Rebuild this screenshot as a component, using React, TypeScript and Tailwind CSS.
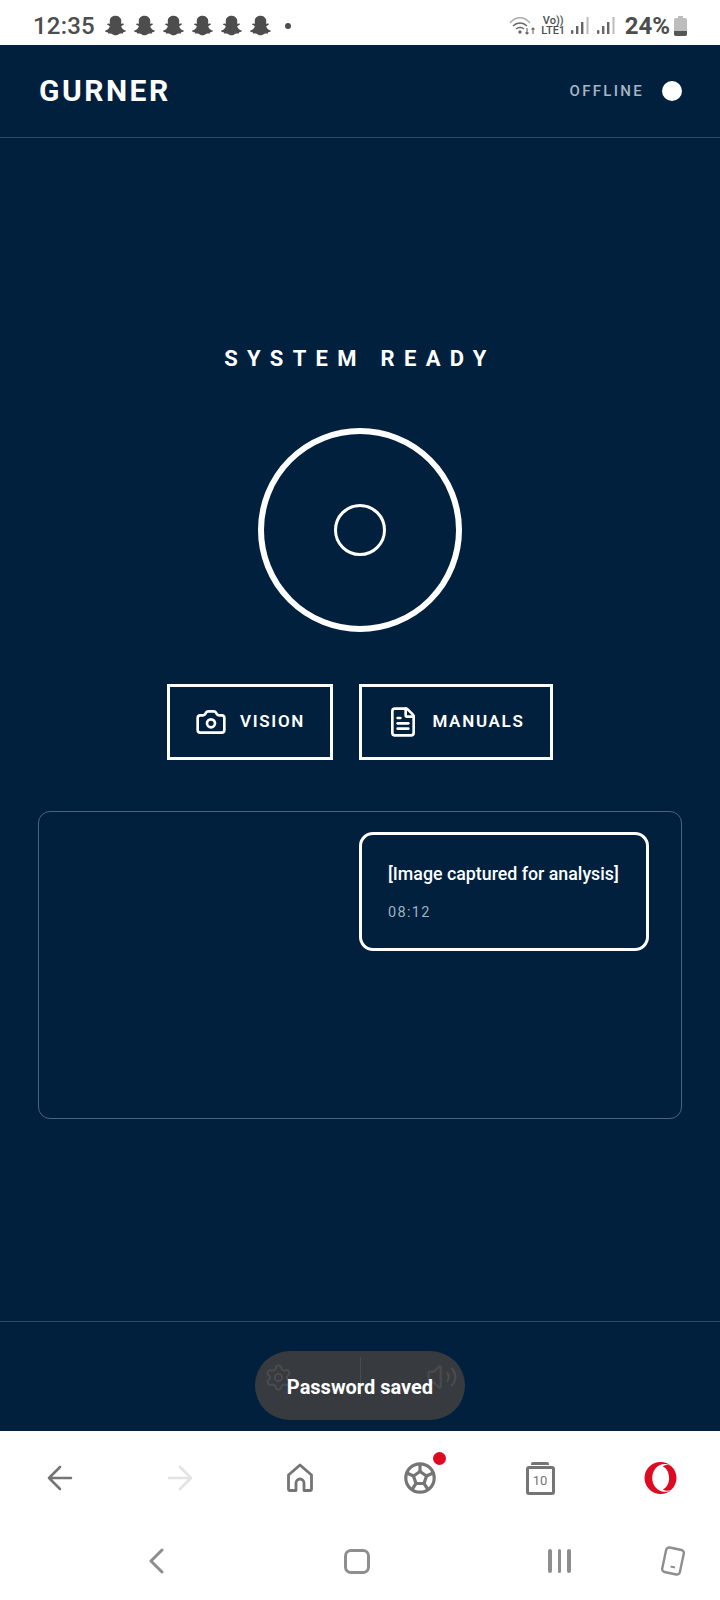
import React from "react";
import { FaSnapchatGhost, FaOpera } from "react-icons/fa";
import { Camera, FileText, Settings, Volume2 } from "lucide-react";

function Bars() {
  return (
    <svg width="18" height="20" viewBox="0 0 18 20" fill="#666">
      <rect x="0" y="14" width="2.4" height="4" rx="1" />
      <rect x="5" y="10" width="2.4" height="8" />
      <rect x="10" y="6" width="2.4" height="12" />
      <rect x="15.500" y="1" width="2" height="17" fill="#bbb" />
    </svg>
  );
}

function StatusBar() {
  return (
    <div className="h-[45px] bg-white flex items-center pt-[6px] pl-[33px] pr-[33px] text-[#4d4d4d] shrink-0 font-['Roboto',sans-serif]">
      <span className="text-[24px] font-medium leading-none tracking-[0.2px]">12:35</span>
      <div className="flex items-center gap-[8px] ml-[10px]">
        {[0, 1, 2, 3, 4, 5].map((i) => (
          <FaSnapchatGhost key={i} size={21} color="#4d4d4d" />
        ))}
      </div>
      <span className="w-[6px] h-[6px] rounded-full bg-[#4d4d4d] ml-[14px]" />
      <div className="ml-auto flex items-center">
        <svg width="26" height="20" viewBox="0 0 26 20" fill="none" stroke="#666" strokeWidth="1.300">
          <path d="M1 7 C7 0 15 0 21 7" stroke="#aaa" />
          <path d="M4 10 C8 6 14 6 18 10" />
          <path d="M7 13 C9 11 13 11 15 13" />
          <circle cx="11" cy="16" r="1" fill="#666" />
          <path d="M18 12v6M16.500 16.500l1.500 1.500 1.500-1.500M24 18v-6M22.500 13.500l1.500-1.500 1.500 1.500" strokeWidth="1.100" />
        </svg>
        <div className="flex flex-col items-center text-[11px] leading-[9px] ml-[7px] font-medium w-[23px]">
          <span>Vo))</span>
          <span className="mt-[1px]">LTE1</span>
        </div>
        <div className="ml-[6px]"><Bars /></div>
        <div className="ml-[8px]"><Bars /></div>
        <span className="text-[24px] font-bold ml-[10px] leading-none">24%</span>
        <svg width="13" height="20" viewBox="0 0 13 20" className="ml-[4px]">
          <rect x="4" y="0" width="5" height="3" fill="#bdbdbd" />
          <rect x="0" y="2" width="13" height="18" rx="2" fill="#bdbdbd" />
          <path d="M0 15h13v3a2 2 0 0 1-2 2H2a2 2 0 0 1-2-2z" fill="#555" />
        </svg>
      </div>
    </div>
  );
}

function Header() {
  return (
    <header className="h-[93px] shrink-0 flex items-center justify-between pl-[39px] pr-[38px] border-b border-[#2f4a68]">
      <span className="text-[30px] font-bold tracking-[2.500px] text-white leading-none">GURNER</span>
      <div className="flex items-center gap-[18px]">
        <span className="text-[15px] font-medium tracking-[2.300px] pt-[1px] text-[#a6b5c4]">OFFLINE</span>
        <span className="w-[20px] h-[20px] rounded-full bg-white" />
      </div>
    </header>
  );
}

function Main() {
  return (
    <main className="flex-1 flex flex-col items-center pt-[207px]">
      <h1 className="text-[22px] leading-[28px] font-bold tracking-[9.300px] text-white">SYSTEM READY</h1>
      <div className="mt-[55px] w-[204px] h-[204px] rounded-full border-[6px] border-white flex items-center justify-center">
        <div className="w-[52px] h-[52px] rounded-full border-[3px] border-white" />
      </div>
      <div className="mt-[52px] flex gap-[26px]">
        <button className="w-[166px] h-[76px] border-[3px] border-white flex items-center justify-center gap-[13px] text-white">
          <Camera size={32} strokeWidth={2} />
          <span className="text-[17px] font-semibold tracking-[1.700px]">VISION</span>
        </button>
        <button className="w-[194px] h-[76px] border-[3px] border-white flex items-center justify-center gap-[13px] text-white">
          <FileText size={32} strokeWidth={2} />
          <span className="text-[17px] font-semibold tracking-[1.700px]">MANUALS</span>
        </button>
      </div>
      <div className="mt-[51px] w-[644px] h-[308px] rounded-[12px] border border-[#4a637e] pt-[20px] pr-[32px] flex flex-col items-end">
        <div className="w-[290px] h-[119px] rounded-[14px] border-[3px] border-white pl-[26px] pt-[26px]">
          <p className="text-[17.800px] font-medium leading-[26px] text-white">[Image captured for analysis]</p>
          <p className="mt-[16px] text-[14.500px] leading-[20px] tracking-[1.300px] text-[#9fb0c0]">08:12</p>
        </div>
      </div>
    </main>
  );
}

function Footer() {
  return (
    <footer className="h-[110px] shrink-0 border-t border-[#2f4a68] flex items-start justify-center pt-[35px] pl-[2px] relative">
      <div className="flex items-center text-white">
        <Settings size={29} strokeWidth={1.600} />
        <span className="ml-[67px] w-px h-[40px] bg-white" />
        <Volume2 size={32} strokeWidth={1.600} className="ml-[65px]" />
      </div>
      <div className="absolute left-[255px] top-[29px] w-[210px] h-[69px] pt-[2px] rounded-full bg-[#3b3d40ed] flex items-center justify-center">
        <span className="text-[20px] font-bold text-white">Password saved</span>
      </div>
    </footer>
  );
}

function BrowserBar() {
  return (
    <div className="h-[94px] shrink-0 bg-white grid grid-cols-6 items-center justify-items-center">
      <svg width="26" height="26" viewBox="0 0 26 26" fill="none" stroke="#757575" strokeWidth="2.600" strokeLinecap="round" strokeLinejoin="round">
        <path d="M24 13H2M13 2 2 13l11 11" />
      </svg>
      <svg width="26" height="26" viewBox="0 0 26 26" fill="none" stroke="#e3e3e3" strokeWidth="2.600" strokeLinecap="round" strokeLinejoin="round">
        <path d="M2 13h22M13 2l11 11-11 11" />
      </svg>
      <svg width="28" height="30" viewBox="0 0 28 30" fill="none" stroke="#757575" strokeWidth="2.800" strokeLinejoin="round">
        <path d="M2.500 12 14 2l11.500 10v14a1.500 1.500 0 0 1-1.500 1.500h-6V20a4 4 0 0 0-8 0v7.500H4A1.500 1.500 0 0 1 2.500 26Z" />
      </svg>
      <div className="relative w-[32px] h-[32px]">
        <svg width="32" height="32" viewBox="0 0 32 32" fill="none" stroke="#757575" strokeWidth="3.200" strokeLinejoin="round">
          <circle cx="16" cy="16" r="14.200" />
          <path d="M16 9.500 22.500 14 20 21.500H12L9.500 14Z" />
          <path d="M16 9.500V2.500M22.500 14l6.500-3M20 21.500l4 6M12 21.500l-4 6M9.500 14 3 11" />
        </svg>
        <span className="absolute -top-[10px] -right-[10px] w-[13px] h-[13px] rounded-full bg-[#dd0a22]" />
      </div>
      <div className="w-[29px] h-[33px] flex flex-col items-center">
        <span className="w-[18px] h-[3px] rounded-t-[2px] bg-[#757575]" />
        <div className="mt-[1px] w-[29px] h-[29px] rounded-[3px] border-[3px] border-[#757575] flex items-center justify-center text-[13px] leading-none text-[#757575]">10</div>
      </div>
      <FaOpera size={33} color="#dd0a22" />
    </div>
  );
}

function NavBar() {
  return (
    <div className="h-[75px] shrink-0 bg-white flex items-center pb-[3px] pl-[148px]">
      <svg width="16" height="26" viewBox="0 0 16 26" fill="none" stroke="#8e8e8e" strokeWidth="3" strokeLinecap="round" strokeLinejoin="round">
        <path d="M14 2 3 13l11 11" />
      </svg>
      <span className="ml-[180px] w-[26px] h-[25px] rounded-[7px] border-[3px] border-[#8e8e8e]" />
      <div className="ml-[178px] flex gap-[6px]">
        <span className="w-[3.500px] h-[24px] rounded-full bg-[#8e8e8e]" />
        <span className="w-[3.500px] h-[24px] rounded-full bg-[#8e8e8e]" />
        <span className="w-[3.500px] h-[24px] rounded-full bg-[#8e8e8e]" />
      </div>
      <svg className="ml-[89px]" width="26" height="30" viewBox="0 0 26 30" fill="none">
        <rect x="4" y="2.500" width="18" height="25" rx="3" transform="rotate(12 13 15)" stroke="#8e8e8e" strokeWidth="2.400" />
        <path d="M10.500 20.500l4.500 1" stroke="#8e8e8e" strokeWidth="2" />
      </svg>
    </div>
  );
}

export default function App() {
  return (
    <div className="w-[720px] h-[1600px] flex flex-col bg-[#00203d] overflow-hidden font-['Roboto',sans-serif]">
      <StatusBar />
      <Header />
      <Main />
      <Footer />
      <BrowserBar />
      <NavBar />
    </div>
  );
}
